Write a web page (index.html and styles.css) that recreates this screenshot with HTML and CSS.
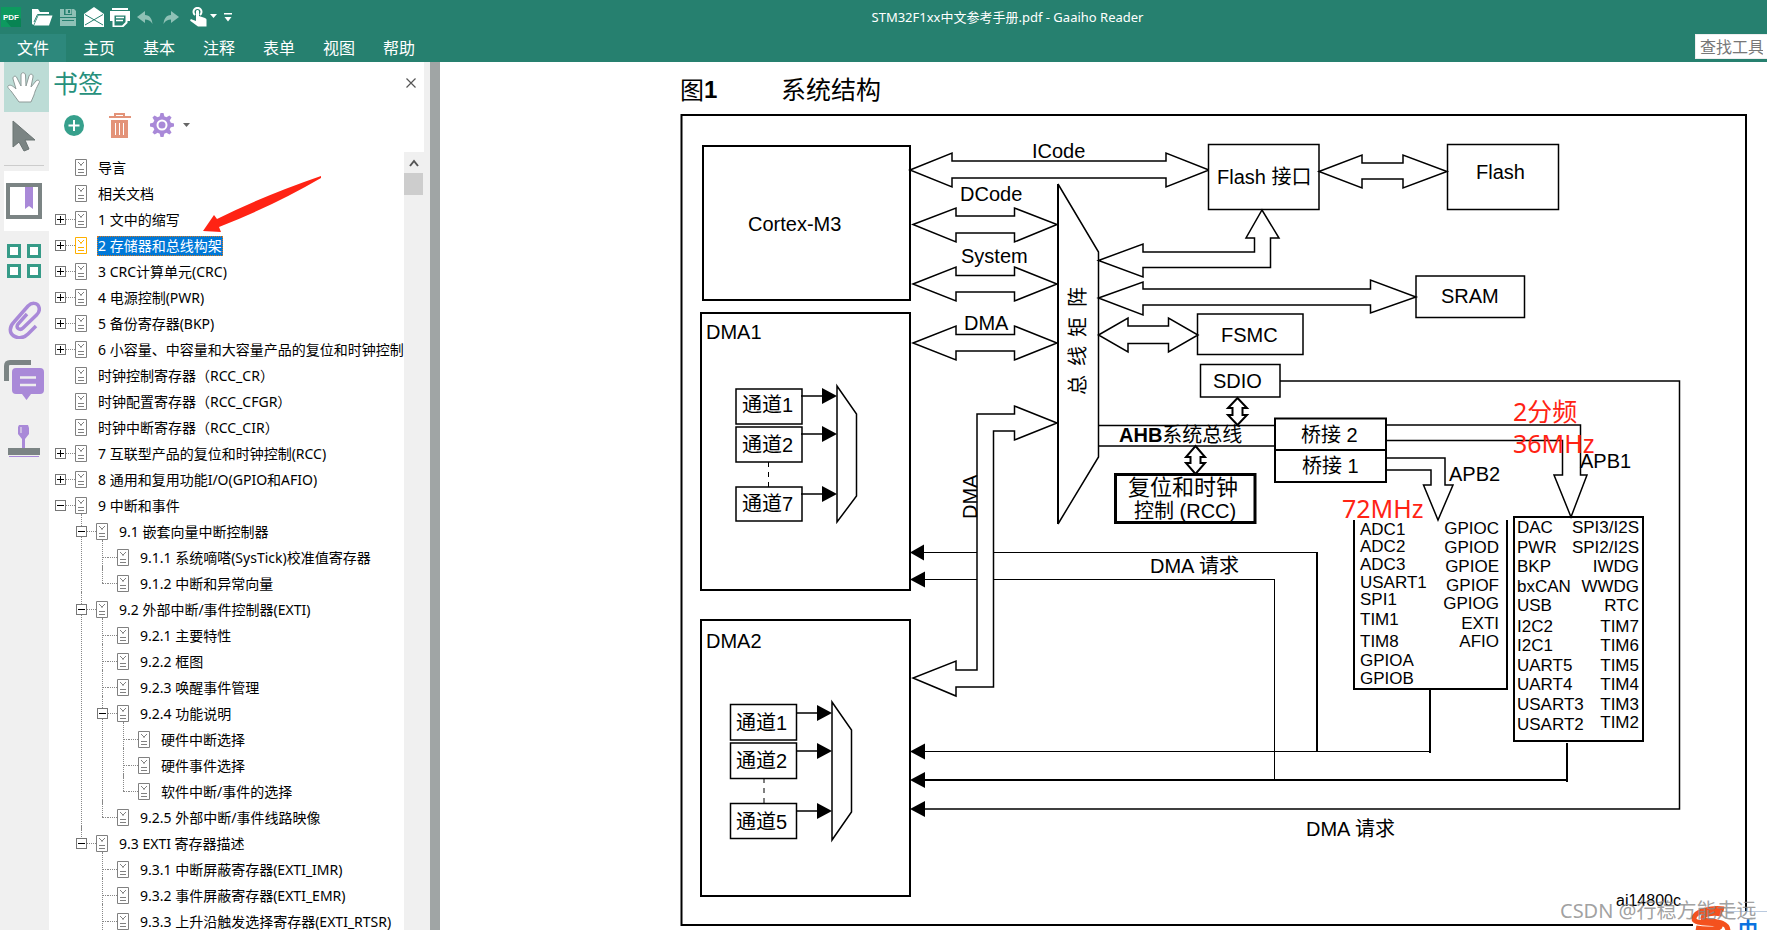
FILE: index.html
```html
<!DOCTYPE html>
<html lang="zh-CN">
<head>
<meta charset="utf-8">
<title>STM32F1xx中文参考手册.pdf - Gaaiho Reader</title>
<link rel="stylesheet" href="styles.css">
</head>
<body>
<svg class="defs" aria-hidden="true">
  <symbol id="page" viewBox="0 0 12 17">
    <path d="M.5.5h11v16H.5z" fill="#fff" stroke="currentColor"/>
    <path d="M3 3l3 3 3-3M6 5v2M3 10.500h6M3 13.500h6" fill="none" stroke="currentColor"/>
  </symbol>
</svg>

<header class="app-header">
  <div class="titlebar">
    <div class="quick">
      <svg class="logo" viewBox="0 0 20 20" role="img" aria-label="PDF"><path d="M0 0h20v20H0z" fill="#0d9a5f"/><path d="M15 7l5 5v8H10L5 14z" fill="#088453"/><text x="10" y="13" text-anchor="middle" class="logo-text">PDF</text></svg>
      <button aria-label="打开"><svg width="21" height="17" viewBox="0 0 21 17"><path d="M0 15V0h6l2 3h9v3H6L1.500 16z" fill="#fff"/><path d="M6.500 6.500H20.500L17 16.500H2z" fill="#fff"/><path d="M2 13L5.500 5.500H17" fill="none" stroke="#26806f"/></svg></button>
      <button aria-label="保存"><svg width="16" height="17" viewBox="0 0 16 17"><path d="M0 0h4v6h8V0h2l2 2v6H0zM5.500 0h6v5h-6zM0 9h16v8H0z" fill="#8fc1b6"/><path d="M8 1h2v3H8z" fill="#26806f"/><path d="M2 11.500h12" stroke="#26806f"/></svg></button>
      <button aria-label="邮件"><svg width="20" height="20" viewBox="0 0 20 20"><path d="M0 7l10-7 10 7v13H0z" fill="#fff"/><path d="M1 7.500l18 10.500M19 7.500L1 18" stroke="#26806f" fill="none"/></svg></button>
      <button aria-label="打印"><svg width="20" height="19" viewBox="0 0 20 19"><path d="M2 0h16v2H2zM0 3h20v10h-3V7H3v6H0z" fill="#fff"/><path d="M3.500 6.500h13v8l-4 4h-9z" fill="#26806f" stroke="#fff" stroke-width="2"/><path d="M6 9.500h8M6 12.500h7" stroke="#fff" stroke-width="1.500"/></svg></button>
      <button aria-label="撤销"><svg width="16" height="13" viewBox="0 0 16 13"><path d="M0 6l8-6v4c5 0 7 4 7.500 9C13.500 9.500 11 8.500 8 8.500V12z" fill="#8fc1b6"/></svg></button>
      <button aria-label="重做"><svg width="16" height="13" viewBox="0 0 16 13"><path d="M16 6L8 0v4C3 4 1 8 .5 13 2.500 9.500 5 8.500 8 8.500V12z" fill="#8fc1b6"/></svg></button>
      <button aria-label="触摸模式"><svg width="27" height="20" viewBox="0 0 27 20"><path d="M5 8a4 4 0 1 1 5 0" fill="none" stroke="#fff" stroke-width="2"/><path d="M6 4.500c0-2 3-2 3 0V9l6 2c1 .5 1.500 1 1.500 2v6.500H8L.5 14c-1-1 .5-2 1.500-1.500l4 1.500z" fill="#fff"/><path d="M20 7h7l-3.500 4z" fill="#fff"/></svg></button>
      <button aria-label="自定义"><svg width="8" height="9" viewBox="0 0 8 9"><path d="M0 0h8v1.500H0zM.5 4h7L4 8.500z" fill="#fff"/></svg></button>
    </div>
    <h1>STM32F1xx中文参考手册.pdf - Gaaiho Reader</h1>
  </div>
  <nav class="menubar">
    <button class="file">文件</button><button>主页</button><button>基本</button><button>注释</button><button>表单</button><button>视图</button><button>帮助</button>
    <input type="text" placeholder="查找工具" aria-label="查找工具">
  </nav>
</header>

<main class="workspace">
  <aside class="rail">
    <button class="hand" aria-label="手型工具"><svg width="34" height="31" viewBox="0 0 34 31"><path d="M12 30L4 19C2 17 0 15 1 14c2-2 5 0 8 3L6 7c-.5-3 3-4 4-1l4 8V3c0-3 4-3 4.500 0L19 14l3-10c1-3 4.500-2 4 1l-2 10 5-6c2-2 4.500 0 3 2-3 6-4 8-5 12l-3 7z" fill="#fff" stroke="#8e9a98"/></svg></button>
    <button class="select" aria-label="选择工具"><svg width="24" height="32" viewBox="0 0 24 32"><path d="M1 1v26l6-5 5 9 5-2-4-9h10z" fill="#7b8483" stroke="#6b7473"/></svg></button>
    <button class="marks" aria-label="书签"><svg width="36" height="36" viewBox="0 0 36 36"><path d="M2 2h32v32H2z" fill="#fff" stroke="#7b8484" stroke-width="4"/><path d="M19 4h8v22l-4-3-4 3z" fill="#a989d8"/></svg></button>
    <button class="thumbs" aria-label="缩略图"><svg width="34" height="34" viewBox="0 0 34 34"><path d="M1.500 1.500h11v11h-11zM21.500 1.500h11v11h-11zM1.500 21.500h11v11h-11zM21.500 21.500h11v11h-11z" fill="#fff" stroke="#369b88" stroke-width="3"/></svg></button>
    <button class="clip" aria-label="附件"><svg width="33" height="38" viewBox="0 0 33 38"><path d="M28 25l-8 8c-6 6-14 4-17-1-2-5 0-8 3-11L20 5c4-4 9-3 10.500 0 2 4 0 7-2 9L15 27c-3 3-8 0-5-4l9-10" fill="none" stroke="#a989d8" stroke-width="3.500"/></svg></button>
    <button class="notes" aria-label="注释"><svg width="40" height="40" viewBox="0 0 40 40"><path d="M2.500 21V6c0-2 1-3.500 3.500-3.500h21" fill="none" stroke="#7b8484" stroke-width="5"/><path d="M12 8h24q4 0 4 4v18q0 4-4 4h-9l-4.500 6-4.500-6h-6q-4 0-4-4V12q0-4 4-4z" fill="#a989d8"/><path d="M16 17.500h16M16 25h16" stroke="#eee" stroke-width="2.500"/></svg></button>
    <button class="stamp" aria-label="图章"><svg width="32" height="34" viewBox="0 0 32 34"><path d="M11 1h9l1 3v6l-4 5v9h-3v-9l-4-5V3z" fill="#a989d8"/><path d="M13 3v6" stroke="#eee"/><path d="M0 24h32v7H0z" fill="#7b8484"/><path d="M1 32.500h30" stroke="#a989d8"/></svg></button>
  </aside>

  <section class="panel">
    <div class="panel-head"><h2>书签</h2><button aria-label="关闭"><svg width="10" height="10" viewBox="0 0 10 10"><path d="M.5.5l9 9M9.500.5l-9 9" stroke="#555" stroke-width="1.200"/></svg></button></div>
    <div class="panel-tools">
      <button aria-label="添加书签"><svg width="20" height="21" viewBox="0 0 20 21"><ellipse cx="10" cy="10.500" rx="10" ry="10.500" fill="#36a08c"/><path d="M4.500 10.500h11M10 5v11" stroke="#fff" stroke-width="2"/></svg></button>
      <button aria-label="删除书签"><svg width="22" height="25" viewBox="0 0 22 25"><path d="M0 3h5V0h11v3h6v2H0zM7 2v1h7V2zM2 7h17v18H2z" fill="#e39379" fill-rule="evenodd"/><path d="M6.500 10v12M10.500 10v12M14.500 10v12" stroke="#fff"/></svg></button>
      <button aria-label="选项"><svg width="40" height="24" viewBox="0 0 40 24"><g fill="#a989d8"><circle cx="12" cy="12" r="9"/><path id="tooth" d="M10.500 0h3l1 4h-5z"/><use href="#tooth" transform="rotate(45 12 12)"/><use href="#tooth" transform="rotate(90 12 12)"/><use href="#tooth" transform="rotate(135 12 12)"/><use href="#tooth" transform="rotate(180 12 12)"/><use href="#tooth" transform="rotate(225 12 12)"/><use href="#tooth" transform="rotate(270 12 12)"/><use href="#tooth" transform="rotate(315 12 12)"/></g><circle cx="12" cy="12" r="4.500" fill="#a989d8" stroke="#fff" stroke-width="2"/><circle cx="12" cy="12" r="2" fill="#a989d8"/><path d="M33 10h7l-3.500 4z" fill="#666"/></svg></button>
    </div>
    <div class="panel-body">
      <ul class="tree">
        <li><div class="row"><i></i><b class="none"></b><svg><use href="#page"/></svg><a href="#">导言</a></div></li>
        <li><div class="row"><i></i><b class="none"></b><svg><use href="#page"/></svg><a href="#">相关文档</a></div></li>
        <li><div class="row"><button class="exp plus" aria-label="展开"></button><b></b><svg><use href="#page"/></svg><a href="#">1 文中的缩写</a></div></li>
        <li><div class="row active"><button class="exp plus" aria-label="展开"></button><b></b><svg><use href="#page"/></svg><a href="#">2 存储器和总线构架</a></div></li>
        <li><div class="row"><button class="exp plus" aria-label="展开"></button><b></b><svg><use href="#page"/></svg><a href="#">3 CRC计算单元(CRC)</a></div></li>
        <li><div class="row"><button class="exp plus" aria-label="展开"></button><b></b><svg><use href="#page"/></svg><a href="#">4 电源控制(PWR)</a></div></li>
        <li><div class="row"><button class="exp plus" aria-label="展开"></button><b></b><svg><use href="#page"/></svg><a href="#">5 备份寄存器(BKP)</a></div></li>
        <li><div class="row"><button class="exp plus" aria-label="展开"></button><b></b><svg><use href="#page"/></svg><a href="#">6 小容量、中容量和大容量产品的复位和时钟控制</a></div></li>
        <li><div class="row"><i></i><b class="none"></b><svg><use href="#page"/></svg><a href="#">时钟控制寄存器（RCC_CR）</a></div></li>
        <li><div class="row"><i></i><b class="none"></b><svg><use href="#page"/></svg><a href="#">时钟配置寄存器（RCC_CFGR）</a></div></li>
        <li><div class="row"><i></i><b class="none"></b><svg><use href="#page"/></svg><a href="#">时钟中断寄存器（RCC_CIR）</a></div></li>
        <li><div class="row"><button class="exp plus" aria-label="展开"></button><b></b><svg><use href="#page"/></svg><a href="#">7 互联型产品的复位和时钟控制(RCC)</a></div></li>
        <li><div class="row"><button class="exp plus" aria-label="展开"></button><b></b><svg><use href="#page"/></svg><a href="#">8 通用和复用功能I/O(GPIO和AFIO)</a></div></li>
        <li><div class="row"><button class="exp" aria-label="折叠"></button><b></b><svg><use href="#page"/></svg><a href="#">9 中断和事件</a></div>
          <ul>
            <li><div class="row"><button class="exp" aria-label="折叠"></button><b></b><svg><use href="#page"/></svg><a href="#">9.1 嵌套向量中断控制器</a></div>
              <ul>
                <li><div class="row"><i></i><b></b><svg><use href="#page"/></svg><a href="#">9.1.1 系统嘀嗒(SysTick)校准值寄存器</a></div></li>
                <li><div class="row"><i></i><b></b><svg><use href="#page"/></svg><a href="#">9.1.2 中断和异常向量</a></div></li>
              </ul></li>
            <li><div class="row"><button class="exp" aria-label="折叠"></button><b></b><svg><use href="#page"/></svg><a href="#">9.2 外部中断/事件控制器(EXTI)</a></div>
              <ul>
                <li><div class="row"><i></i><b></b><svg><use href="#page"/></svg><a href="#">9.2.1 主要特性</a></div></li>
                <li><div class="row"><i></i><b></b><svg><use href="#page"/></svg><a href="#">9.2.2 框图</a></div></li>
                <li><div class="row"><i></i><b></b><svg><use href="#page"/></svg><a href="#">9.2.3 唤醒事件管理</a></div></li>
                <li><div class="row"><button class="exp" aria-label="折叠"></button><b></b><svg><use href="#page"/></svg><a href="#">9.2.4 功能说明</a></div>
                  <ul>
                    <li><div class="row"><i></i><b></b><svg><use href="#page"/></svg><a href="#">硬件中断选择</a></div></li>
                    <li><div class="row"><i></i><b></b><svg><use href="#page"/></svg><a href="#">硬件事件选择</a></div></li>
                    <li><div class="row"><i></i><b></b><svg><use href="#page"/></svg><a href="#">软件中断/事件的选择</a></div></li>
                  </ul></li>
                <li><div class="row"><i></i><b></b><svg><use href="#page"/></svg><a href="#">9.2.5 外部中断/事件线路映像</a></div></li>
              </ul></li>
            <li><div class="row"><button class="exp" aria-label="折叠"></button><b></b><svg><use href="#page"/></svg><a href="#">9.3 EXTI 寄存器描述</a></div>
              <ul class="more">
                <li><div class="row"><i></i><b></b><svg><use href="#page"/></svg><a href="#">9.3.1 中断屏蔽寄存器(EXTI_IMR)</a></div></li>
                <li><div class="row"><i></i><b></b><svg><use href="#page"/></svg><a href="#">9.3.2 事件屏蔽寄存器(EXTI_EMR)</a></div></li>
                <li><div class="row"><i></i><b></b><svg><use href="#page"/></svg><a href="#">9.3.3 上升沿触发选择寄存器(EXTI_RTSR)</a></div></li>
              </ul></li>
          </ul></li>
      </ul>
      <div class="scrollbar"><button aria-label="向上滚动"><svg width="10" height="8" viewBox="0 0 10 8"><path d="M1 7l4-5 4 5" fill="none" stroke="#555" stroke-width="2"/></svg></button><div class="thumb"></div></div>
    </div>
    <svg class="pointer" viewBox="0 0 120 58" aria-hidden="true"><path d="M118 0Q60 20 14 43L11 39 0 55l18 1-2-5Q70 30 118 2z" fill="#ff2314"/></svg>
  </section>
  <div class="splitter"></div>

  <article class="document">
    <svg class="diagram" viewBox="440 62 1327 868" role="img" aria-label="系统结构">
      <text x="680" y="99" class="t24">图</text><text x="704" y="98" class="t24 bold">1</text>
      <text x="781" y="99" class="t25">系统结构</text>

      <g class="ln">
        <path class="w2" d="M1693 925H681.500V115H1746V911"/>
        <path class="w2" d="M703 146H910V300H703z"/>
        <path class="w2" d="M701 313H910V590H701z"/>
        <path class="w2" d="M701 620H910V896H701z"/>
        <!-- core buses -->
        <path d="M910 170L952 153V161H1166V153L1209 170L1166 187V178H952V187z"/>
        <path d="M913 224.500L956 208V216H1014.500V208L1057 224.500L1014.500 242V233H956V242z"/>
        <path d="M913 284L956 267V275.500H1014.500V267L1057 284L1014.500 301V292H956V301z"/>
        <path d="M913 343L956 326V334.500H1014.500V326L1057 343L1014.500 360V351H956V360z"/>
        <path d="M1058 184L1098.500 252V457L1058 524"/>
        <path class="w2" d="M1058 184V524"/>
        <!-- SDIO request line and AHB bus -->
        <path class="open" d="M1098 425.500H1275M1098 446H1275M1280 381H1679.500V809H925"/>
        <!-- memories -->
        <path d="M1208.500 144.500H1319V209.500H1208.500zM1447.500 144.500H1558.500V209.500H1447.500zM1416 276H1524.500V317.500H1416zM1197.500 314H1303V354.500H1197.500zM1200.500 364.500H1280V397H1200.500z"/>
        <path d="M1319 171.500L1362 155V163H1403V155L1447 171.500L1403 188V179H1362V188z"/>
        <path d="M1098.500 260.500L1143 244V252H1254.500V238H1246L1262 210L1279 238H1270.500V267.500H1143V277z"/>
        <path d="M1098.500 298L1143 282V289H1370.500V280L1416 297L1370.500 313V305H1143V315z"/>
        <path d="M1098.500 335L1128 318V326H1168.500V318L1198 335L1168.500 352V343.500H1128V352z"/>
        <!-- bridges -->
        <path d="M1237.500 398L1247 408H1242.500V415H1247L1237.500 425L1228 415H1232.500V408H1228zM1195.500 446L1205 457H1200.500V463H1205L1195.500 474L1186 463H1190.500V457H1186z" class="w2"/>
        <path class="w2" d="M1275 418.500H1386V482H1275zM1275 450H1386"/>
        <path class="w3" d="M1115.500 474.500H1255V522.500H1115.500z"/>
        <path class="open" d="M1386 425H1580.500V475H1587L1571 517L1554 475H1562.500V440.500H1386M1386 458H1445V485H1453L1438 520L1423.500 485H1431V470H1386"/>
        <path class="w2 open" d="M1354 520V689H1507V520M1514 517H1643V741H1514z"/>
        <!-- DMA requests -->
        <path class="w1" d="M922 552.500H1317M925 579.500H1274.500M1274.500 579V780M925 751.500H1430"/>
        <path class="w2 open" d="M1317 552V751M1430 689V753M1567 743V782M925 780H1568"/>
        <path d="M1057 423L1014.500 406V414H977V670H956V661L913 678L956 696V687H993.500V431H1014.500V440z"/>
        <!-- channel groups -->
        <path d="M736 389H802V424H736zM736 427H802V462H736zM736 487H802V521H736zM801 396H823M801 434H823M801 494H823M837 386L856.500 414V496L837 522z"/>
        <path d="M730.500 704.500H796.500V740H730.500zM730.500 743H796.500V778.500H730.500zM730.500 803.500H796.500V838.500H730.500zM796 713H818M796 751H818M796 811H818M832 702L851.500 730V812L832 840z"/>
        <path class="w1" stroke-dasharray="5 5" d="M768.500 462V487M764 778V803"/>
      </g>
      <path d="M837 396l-15-8v16zM837 434l-15-8v16zM837 494l-15-8v16zM832 713l-15-8v16zM832 751l-15-8v16zM832 811l-15-8v16zM910 552.500l14-8v16zM910 579.500l15-8v16zM910 751.500l15-8v16zM910 780l15-8v16zM910 809l15-8v16z"/>

      <g class="t20">
        <text x="748" y="231">Cortex-M3</text><text x="1032" y="158">ICode</text><text x="960" y="201">DCode</text><text x="961" y="263">System</text><text x="964" y="330">DMA</text>
        <text x="706" y="339">DMA1</text><text x="706" y="648">DMA2</text>
        <text x="1217" y="184">Flash 接口</text><text x="1476" y="179">Flash</text><text x="1441" y="303">SRAM</text><text x="1221" y="342">FSMC</text><text x="1213" y="388">SDIO</text>
        <text x="742" y="412">通道1</text><text x="742" y="452">通道2</text><text x="742" y="511">通道7</text>
        <text x="736" y="730">通道1</text><text x="736" y="768">通道2</text><text x="736" y="829">通道5</text>
        <text x="1119" y="442"><tspan class="bold">AHB</tspan>系统总线</text>
        <text x="1301" y="442">桥接 2</text><text x="1302" y="473">桥接 1</text>
        <text x="1128" y="495" class="t22">复位和时钟</text><text x="1134" y="518">控制 (RCC)</text>
        <text x="1449" y="481">APB2</text><text x="1580" y="468">APB1</text>
        <text x="1150" y="573">DMA 请求</text><text x="1306" y="836">DMA 请求</text>
        <text transform="translate(977 519) rotate(-90)">DMA</text>
        <text transform="translate(1085 395) rotate(-90)">总</text><text transform="translate(1085 366) rotate(-90)">线</text><text transform="translate(1085 337) rotate(-90)">矩</text><text transform="translate(1085 307) rotate(-90)">阵</text>
      </g>
      <g class="t17">
        <text x="1360" y="535">ADC1</text><text x="1360" y="552">ADC2</text><text x="1360" y="570">ADC3</text><text x="1360" y="588">USART1</text><text x="1360" y="605">SPI1</text><text x="1360" y="625">TIM1</text><text x="1360" y="647">TIM8</text><text x="1360" y="666">GPIOA</text><text x="1360" y="684">GPIOB</text>
        <text x="1517" y="533">DAC</text><text x="1517" y="553">PWR</text><text x="1517" y="572">BKP</text><text x="1517" y="592">bxCAN</text><text x="1517" y="611">USB</text><text x="1517" y="632">I2C2</text><text x="1517" y="651">I2C1</text><text x="1517" y="671">UART5</text><text x="1517" y="690">UART4</text><text x="1517" y="710">USART3</text><text x="1517" y="730">USART2</text>
      </g>
      <g class="t17 end">
        <text x="1499" y="534">GPIOC</text><text x="1499" y="553">GPIOD</text><text x="1499" y="572">GPIOE</text><text x="1499" y="591">GPIOF</text><text x="1499" y="609">GPIOG</text><text x="1499" y="629">EXTI</text><text x="1499" y="647">AFIO</text>
        <text x="1639" y="533">SPI3/I2S</text><text x="1639" y="553">SPI2/I2S</text><text x="1639" y="572">IWDG</text><text x="1639" y="592">WWDG</text><text x="1639" y="611">RTC</text><text x="1639" y="632">TIM7</text><text x="1639" y="651">TIM6</text><text x="1639" y="671">TIM5</text><text x="1639" y="690">TIM4</text><text x="1639" y="710">TIM3</text><text x="1639" y="728">TIM2</text>
      </g>
      <g class="note"><text x="1513" y="421">2分频</text><text x="1513" y="453">36MHz</text><text x="1342" y="518">72MHz</text></g>
      <text x="1616" y="906" class="t16">ai14800c</text>
      <path d="M1720 911.500h47" stroke="#b9c9de"/>
      <path d="M1724 909c-12-2-29 2-30 9-1 8 24 3 26 8 1 3-12 4-24 2M1722 914c-10-2-19 0-19 4 0 5 25 0 25 13" fill="none" stroke="#f4511e" stroke-width="5"/>
      <text x="1738" y="937" class="ime">中</text>
      <text x="1560" y="918" class="mark">CSDN @行稳方能走远</text>
    </svg>
  </article>
</main>
</body>
</html>
```
FILE: styles.css
```css
* { box-sizing: border-box; }
body {
  margin: 0;
  height: 100vh;
  display: flex;
  flex-direction: column;
  overflow: hidden;
  background: #fff;
  color: #000;
  font-family: "Noto Sans", "Noto Sans CJK SC", sans-serif;
  font-size: 14px;
}
button { border: 0; padding: 0; background: none; font: inherit; color: inherit; display: flex; align-items: center; justify-content: center; }
svg { display: block; flex: none; }
.defs { position: absolute; width: 0; height: 0; }

.app-header { background: #26806f; color: #fff; flex: none; }
.titlebar { height: 34px; display: flex; align-items: center; }
.quick { display: flex; align-items: center; gap: 11px; padding-left: 1px; }
.quick button:nth-of-type(1) { margin-right: -4px; }
.quick button:nth-of-type(2) { margin-right: -3px; }
.quick button:nth-of-type(3) { margin-right: -5px; }
.quick button:nth-of-type(4) { margin-right: -4px; }
.quick button:nth-of-type(5) { margin-right: -1px; }
.quick button:nth-of-type(7) { margin-right: -4px; }
.logo { width: 20px; height: 20px; }
.logo-text { font: bold 8px "Liberation Sans", sans-serif; fill: #fff; }
.titlebar h1 { flex: 1; margin: 0; padding: 0 0 2px 16px; text-align: center; font-size: 13px; font-weight: 400; }
.menubar { height: 28px; display: flex; font-size: 16px; }
.menubar button { width: 60px; padding-bottom: 2px; }
.menubar .file { width: 66px; margin-right: 3px; background: #2d887c; }
.menubar input { width: 72px; height: 25px; margin-left: auto; padding: 0 4px; border: 1px solid #eee; border-right: 0; background: #fff; font: inherit; }
.menubar input::placeholder { color: #777; opacity: 1; }

.workspace { flex: 1; min-height: 0; display: flex; }
.rail { width: 49px; flex: none; padding-left: 4px; background: #f0f0f0; display: flex; flex-direction: column; }
.rail button { flex: none; justify-content: flex-start; }
.rail .hand { height: 50px; padding-left: 3px; background: #bcdcd6; }
.rail .select { height: 54px; margin-right: 5px; padding: 0 0 5px 8px; border-bottom: 1px solid #ccc; }
.rail .marks { height: 60px; margin-top: 5px; padding-left: 2px; background: #fff; }
.rail .thumbs { height: 60px; padding-left: 3px; }
.rail .clip { height: 58px; padding-left: 4px; }
.rail .notes { height: 62px; }
.rail .stamp { height: 60px; padding-left: 4px; }

.panel { width: 375px; flex: none; display: flex; flex-direction: column; position: relative; }
.panel-head { height: 42px; flex: none; display: flex; align-items: center; justify-content: space-between; padding: 0 8px 0 4px; }
.panel-head h2 { margin: 0; font-size: 25px; line-height: 30px; font-weight: 400; color: #26907c; }
.panel-tools { height: 48px; flex: none; display: flex; align-items: flex-start; gap: 19px; padding: 9px 0 0 15px; }
.panel-tools button { height: 24px; }
.panel-tools button:nth-child(2) { margin-left: 6px; }
.panel-body { flex: 1; min-height: 0; display: flex; overflow: hidden; }
.tree { flex: 1; min-width: 0; margin: 0; padding: 2px 0 0 6px; list-style: none; overflow: hidden; }
.tree ul { margin: 0; padding: 0 0 0 21px; list-style: none; }
.tree li { position: relative; }
.tree ul > li::before { content: ""; position: absolute; left: 5px; top: -4px; bottom: 0; border-left: 1px dotted #888; }
.tree ul > li:last-child::before { bottom: auto; height: 17px; }
.tree ul.more > li:last-child::before { height: auto; bottom: 0; }
.row { height: 26px; display: flex; align-items: center; white-space: nowrap; }
.row > svg { width: 12px; height: 17px; color: #808080; }
.row > a { margin: 2px 0 0 10px; padding: 0 1px; line-height: 20px; color: #000; text-decoration: none; }
.row > i { width: 11px; flex: none; }
.tree ul .row > i { width: 6px; margin-left: 5px; border-top: 1px dotted #888; }
.row > b { width: 9px; flex: none; border-top: 1px dotted #888; }
.row > .none { border: 0; }
.exp { position: relative; width: 11px; height: 11px; flex: none; border: 1px solid #777; background: linear-gradient(#000, #000) center / 7px 1px no-repeat #fff; }
.exp.plus { background: linear-gradient(#000, #000) center / 7px 1px no-repeat, linear-gradient(#000, #000) center / 1px 7px no-repeat #fff; }
.active > svg { color: #ffb000; }
.active > a { background: #0078d7; color: #fff; outline: 1px dotted #d87a20; outline-offset: -1px; }
.scrollbar { width: 20px; flex: none; background: #f0f0f0; }
.scrollbar button { width: 19px; height: 21px; }
.thumb { width: 19px; height: 22px; background: #cdcdcd; }
.pointer { position: absolute; left: 154px; top: 114px; width: 120px; height: 58px; }
.splitter { width: 16px; flex: none; border-left: 6px solid #f0f0f0; background: #a0a5a5; }

.document { flex: 1; min-width: 0; overflow: hidden; background: #fff; }
.diagram { width: 100%; height: auto; font-family: "Liberation Sans", "Noto Sans CJK SC", sans-serif; }
.ln { fill: #fff; stroke: #000; stroke-width: 1.5; }
.ln .open { fill: none; }
.ln .w1 { stroke-width: 1; fill: none; }
.ln .w2 { stroke-width: 2; }
.ln .w3 { stroke-width: 3; }
.t16 { font-size: 16px; }
.t17 { font-size: 17px; }
.t20 { font-size: 20px; }
.t22 { font-size: 22px; }
.t24 { font-size: 24px; }
.t25 { font-size: 25px; }
.bold { font-weight: 700; }
.end { text-anchor: end; }
.note { font-family: "Noto Sans", "Noto Sans CJK SC", sans-serif; font-size: 25px; fill: #ff2314; }
.ime { font-size: 20px; font-weight: 700; fill: #0a72e0; }
.mark { font-family: "Noto Sans", "Noto Sans CJK SC", sans-serif; font-size: 20px; fill: #888; fill-opacity: .8; }
```
